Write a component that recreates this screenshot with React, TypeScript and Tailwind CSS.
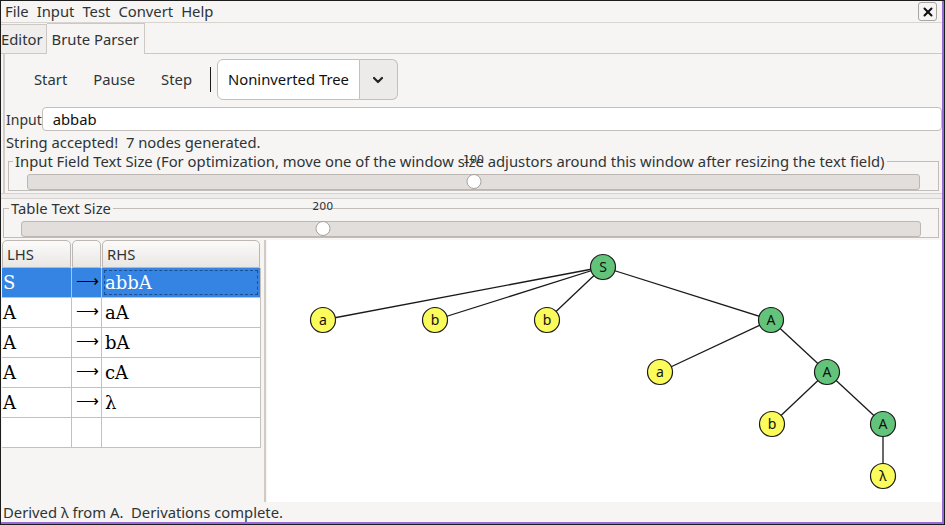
import React from "react";
import { ChevronDown, X } from "lucide-react";

const menus = ["File", "Input", "Test", "Convert", "Help"];

const rules = [
  { lhs: "S", rhs: "abbA" },
  { lhs: "A", rhs: "aA" },
  { lhs: "A", rhs: "bA" },
  { lhs: "A", rhs: "cA" },
  { lhs: "A", rhs: "λ" },
];

type Node = { id: string; label: string; x: number; y: number; green?: boolean };

const nodes: Node[] = [
  { id: "s", label: "S", x: 603, y: 267, green: true },
  { id: "a1", label: "a", x: 323, y: 320 },
  { id: "b1", label: "b", x: 435, y: 320 },
  { id: "b2", label: "b", x: 547, y: 320 },
  { id: "A1", label: "A", x: 771, y: 320, green: true },
  { id: "a2", label: "a", x: 660, y: 372 },
  { id: "A2", label: "A", x: 827, y: 372, green: true },
  { id: "b3", label: "b", x: 772, y: 424 },
  { id: "A3", label: "A", x: 883, y: 424, green: true },
  { id: "l", label: "λ", x: 883, y: 476 },
];

const edges = [
  ["s", "a1"],
  ["s", "b1"],
  ["s", "b2"],
  ["s", "A1"],
  ["A1", "a2"],
  ["A1", "A2"],
  ["A2", "b3"],
  ["A2", "A3"],
  ["A3", "l"],
];

function Slider({ value, pos }: { value: string; pos: string }) {
  return (
    <div className="relative h-[16px] rounded-[3px] border border-[#bcb7b2] bg-[#e1dedb]">
      <span
        className={`absolute top-[-21px] -translate-x-1/2 text-[11px] leading-[12px] text-[#2e3436] font-['DejaVu_Sans',sans-serif] ${pos}`}
      >
        {value}
      </span>
      <span
        className={`absolute top-[-1px] h-[15px] w-[15px] -translate-x-1/2 rounded-full border border-[#a6a19c] bg-white ${pos}`}
      />
    </div>
  );
}

function Tree() {
  const byId = Object.fromEntries(nodes.map((n) => [n.id, n]));
  return (
    <svg width="673" height="260" className="block">
      <g transform="translate(-267,-240)">
        {edges.map(([a, b]) => (
          <line
            key={a + b}
            x1={byId[a].x}
            y1={byId[a].y}
            x2={byId[b].x}
            y2={byId[b].y}
            stroke="#1a1a1a"
            strokeWidth="1.3"
          />
        ))}
        {nodes.map((n) => (
          <g key={n.id}>
            <circle
              cx={n.x}
              cy={n.y}
              r="12.5"
              fill={n.green ? "#62c47b" : "#fbfb5c"}
              stroke="#1a1a1a"
              strokeWidth="1.2"
            />
            <text
              x={n.x}
              y={n.y + 5}
              textAnchor="middle"
              fontSize="14"
              fontFamily="'Noto Sans', sans-serif"
              fill="#111"
            >
              {n.label}
            </text>
          </g>
        ))}
      </g>
    </svg>
  );
}

export default function App() {
  return (
    <div className="h-[525px] w-[945px] overflow-hidden border border-[#1c1c1c] bg-[#f6f5f4] font-['Noto_Sans',sans-serif] text-[14.8px] text-[#2e3436]">
      <div className="flex h-full flex-col border-b-2 border-r-2 border-[#9a6bd6]">
        {/* menu bar */}
        <div className="flex h-[22px] items-center gap-[8px] border-b border-[#d8d4d0] pl-[4px] pr-[5px]">
          {menus.map((m) => (
            <span key={m}>{m}</span>
          ))}
          <button className="ml-auto flex h-[19px] w-[19px] items-center justify-center rounded-[3px] border border-[#a9a49f] bg-[#f6f5f4]">
            <X size={14} strokeWidth={3.5} color="#111" />
          </button>
        </div>

        {/* tabs */}
        <div className="flex h-[31px] items-end border-b border-[#cdc8c3]">
          <div className="flex h-[29px] items-center border-r border-t border-[#cdc8c3] bg-[#efeeec] pr-[3px]">
            Editor
          </div>
          <div className="relative top-[1px] flex h-[31px] items-center border-r border-t border-[#cdc8c3] bg-[#f6f5f4] px-[5px]">
            Brute Parser
          </div>
        </div>

        {/* parser panel */}
        <div className="ml-[2px] flex flex-col border-l-2 border-[#d3cec9]">
          <div className="flex h-[51px] items-center pl-[29px]">
            <div className="flex gap-[26px]">
              <span>Start</span>
              <span>Pause</span>
              <span>Step</span>
            </div>
            <div className="ml-[18px] h-[25px] w-[1px] bg-[#1a1a1a]" />
            <div className="ml-[6px] flex h-[41px] items-center rounded-l-[6px] border border-[#c4bfba] bg-white px-[10px] text-[#111]">
              Noninverted Tree
            </div>
            <div className="flex h-[41px] w-[38px] items-center justify-center rounded-r-[6px] border border-l-0 border-[#c4bfba] bg-[#ecebe9]">
              <ChevronDown size={16} strokeWidth={3.2} color="#222" />
            </div>
          </div>

          <div className="flex h-[28px] items-center">
            <span className="shrink-0 whitespace-nowrap pl-[1px] text-[14px]">Input</span>
            <div className="flex h-[24px] flex-1 items-center rounded-[4px] border border-[#c4bfba] bg-white pl-[10px] text-[#111]">
              abbab
            </div>
          </div>

          <div className="h-[19px] whitespace-pre pl-[1px] leading-[19px]">String accepted!  7 nodes generated.</div>

          <fieldset className="mb-[2px] ml-[3px] mr-[3px] border border-[#c1bcb7] px-[18px] pb-0">
            <legend className="ml-[-14px] px-[2px] leading-[18px]">
              Input Field Text Size (For optimization, move one of the window size adjustors around this window after resizing the text field)
            </legend>
            <div className="mt-[4px]">
              <Slider value="100" pos="left-[50%]" />
            </div>
          </fieldset>
        </div>

        {/* divider */}
        <div className="h-[6px] border-y border-[#d6d1cc] bg-[#efedeb]" />

        <fieldset className="ml-[2px] mr-[3px] border border-[#c1bcb7] pl-[17px] pr-[17px]">
          <legend className="ml-[-12px] px-[2px] leading-[18px]">Table Text Size</legend>
          <div className="mt-[4px]">
            <Slider value="200" pos="left-[33.5%]" />
          </div>
        </fieldset>

        {/* grammar table + tree */}
        <div className="mt-[2px] flex min-h-0 flex-1">
          <div className="w-[261px] pl-[1px]">
            <div className="flex h-[28px] gap-[1px]">
              <div className="flex w-[69px] items-center rounded-t-[5px] border border-[#bcb7b2] bg-gradient-to-b from-[#fbfbfa] to-[#e9e7e4] pl-[4px]">
                LHS
              </div>
              <div className="w-[29px] rounded-t-[5px] border border-[#bcb7b2] bg-gradient-to-b from-[#fbfbfa] to-[#e9e7e4]" />
              <div className="flex w-[158px] items-center rounded-t-[5px] border border-[#bcb7b2] bg-gradient-to-b from-[#fbfbfa] to-[#e9e7e4] pl-[4px]">
                RHS
              </div>
            </div>
            <div className="w-[259px] border-r border-[#c4c0bc] bg-white font-['DejaVu_Serif',serif] text-[18px] text-black">
              {rules.map((r, i) => {
                const sel = i === 0;
                return (
                  <div
                    key={i}
                    className={`flex h-[30px] border-b border-[#c4c0bc] ${sel ? "bg-[#3584e4] text-white" : ""}`}
                  >
                    <div className="flex w-[70px] items-center border-r border-[#c4c0bc] pl-[1px]">{r.lhs}</div>
                    <div className="flex w-[30px] items-center border-r border-[#c4c0bc] pb-[3px] pl-[4px] font-['DejaVu_Sans',sans-serif] text-[16px] font-light text-black">
                      ⟶
                    </div>
                    <div className="flex flex-1 items-center p-[2px]">
                      <div
                        className={`flex h-full w-full items-center ${sel ? "border border-dashed border-[#1d4e8c]" : "border border-transparent"}`}
                      >
                        {r.rhs}
                      </div>
                    </div>
                  </div>
                );
              })}
              <div className="flex h-[30px] border-b border-[#c4c0bc]">
                <div className="w-[70px] border-r border-[#c4c0bc]" />
                <div className="w-[30px] border-r border-[#c4c0bc]" />
              </div>
            </div>
          </div>
          <div className="ml-[2px] w-[3px] border-l-2 border-[#d0cbc6]" />
          <div className="flex-1 overflow-hidden bg-white">
            <Tree />
          </div>
        </div>

        {/* status */}
        <div className="flex h-[20px] items-center whitespace-pre pl-[2px]">Derived λ from A.  Derivations complete.</div>
      </div>
    </div>
  );
}
